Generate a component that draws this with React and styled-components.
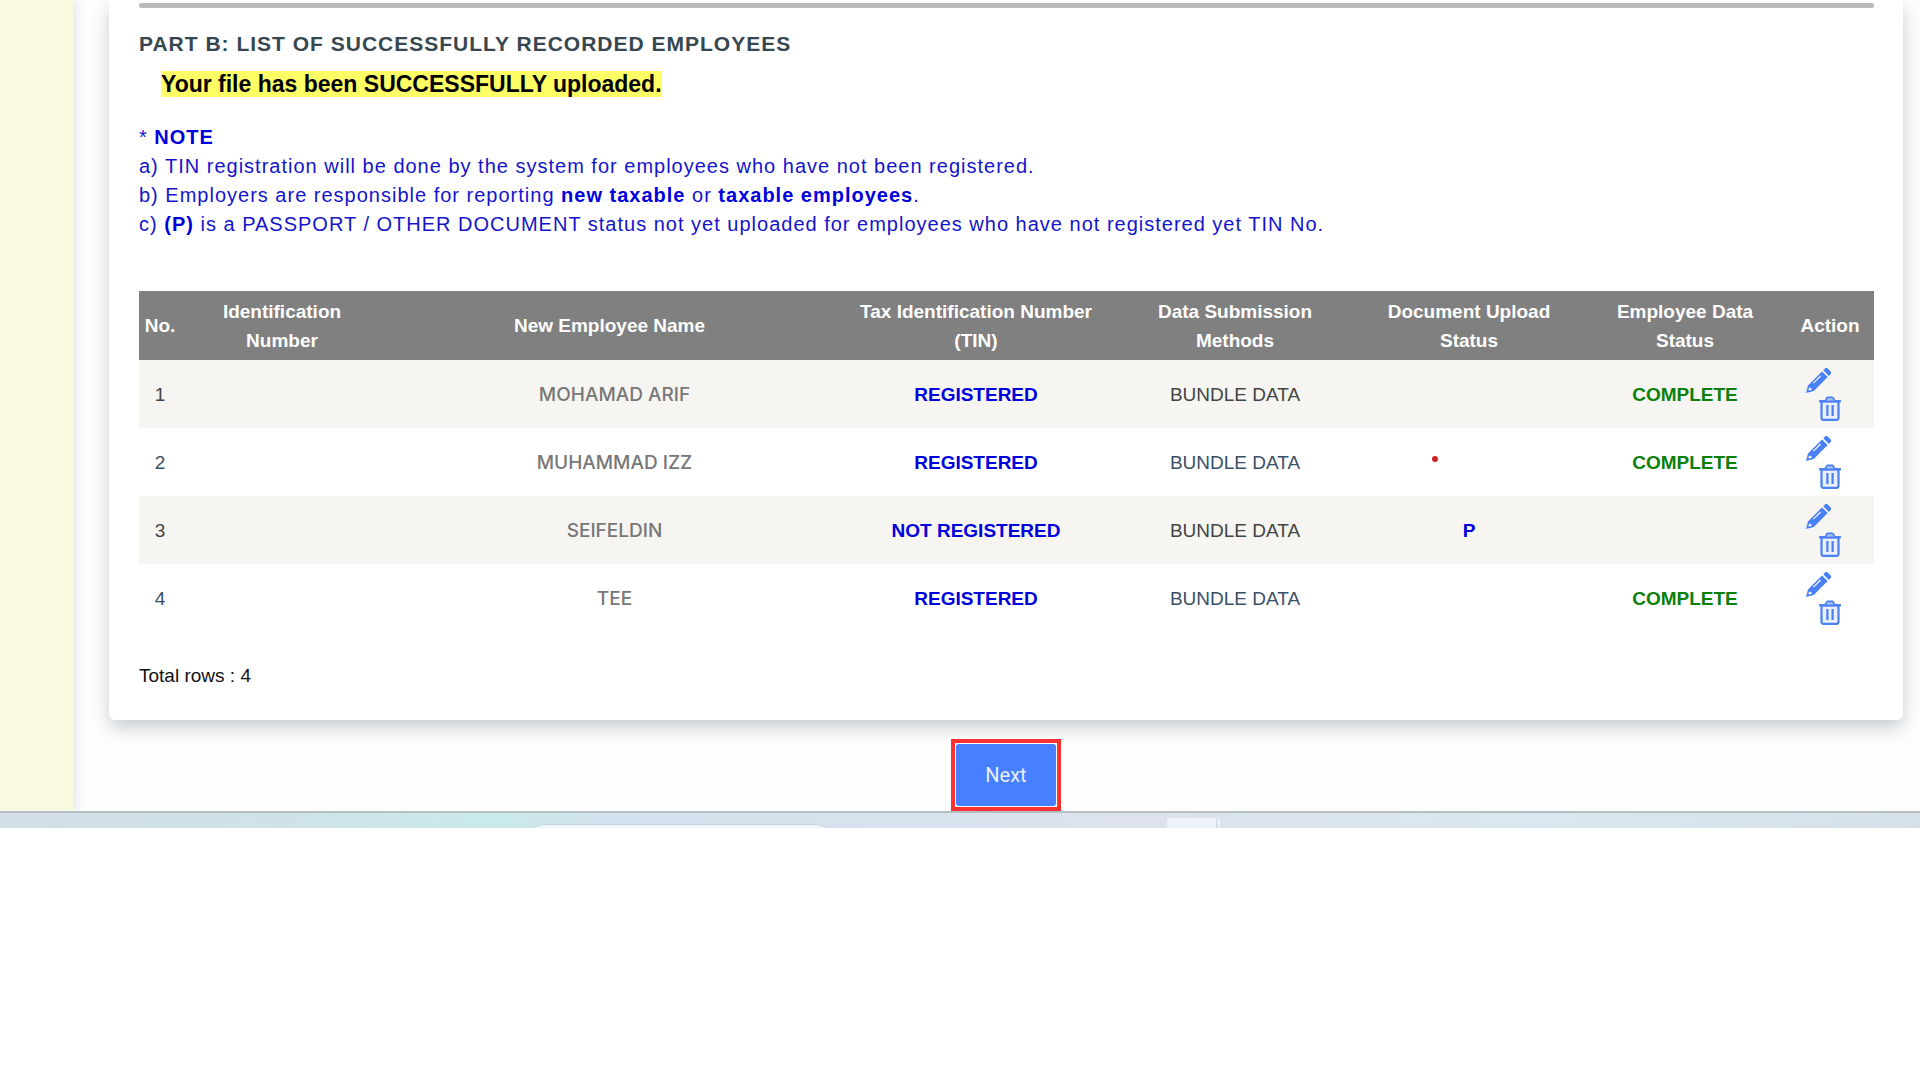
import React from 'react';
import styled, { createGlobalStyle } from 'styled-components';

const GlobalStyle = createGlobalStyle`
  * {
    box-sizing: border-box;
  }
  body {
    margin: 0;
    background-color: #ffffff;
    font-family: "Liberation Sans", Arial, sans-serif;
    font-size: 19px;
    line-height: 29px;
  }
`;

const Screen = styled.div`
  display: flex;
  flex-direction: column;
`;
const Page = styled.div`
  display: flex;
  background-color: #fefefe;
`;
const Sidebar = styled.aside`
  flex: 0 0 73px;
  background-color: #fafae0;
  box-shadow: 2px 0 12px rgba(70, 80, 110, 0.18);
`;
const Main = styled.main`
  flex: 1;
  min-width: 0;
  display: flex;
  flex-direction: column;
  align-items: center;
  padding: 0 17px 0 36px;
`;
const Card = styled.section`
  width: 100%;
  padding: 3px 29px 30px 30px;
  background-color: #ffffff;
  border-radius: 0 0 6px 6px;
  box-shadow: 0 8px 18px rgba(60, 80, 90, 0.28);
`;
const Divider = styled.hr`
  height: 5px;
  margin: 0;
  border: none;
  border-radius: 2px;
  background-color: #bbbbbb;
`;
const Title = styled.h2`
  margin: 21px 0 0;
  font-size: 21px;
  line-height: 29px;
  font-weight: bold;
  letter-spacing: 1px;
  color: #37474f;
`;
const Message = styled.p`
  margin: 11px 0 0 22px;
  font-size: 23px;
  line-height: 30px;
  font-weight: bold;
  color: #000000;
`;
const Mark = styled.mark`
  background-color: #ffff66;
  color: inherit;
`;
const Note = styled.div`
  margin-top: 24px;
  font-size: 20px;
  letter-spacing: 1px;
  color: #1414cc;

  p {
    margin: 0;
  }
  b {
    color: #0000dd;
  }
`;
const Table = styled.table`
  width: 100%;
  margin-top: 52px;
  table-layout: fixed;
  border-collapse: collapse;
`;
const Col = styled.col`
  width: ${(props) => props.$width};
`;
const HeadCell = styled.th`
  height: 69px;
  padding: 5px;
  background-color: #808080;
  font-weight: bold;
  color: #ffffff;
`;
const Row = styled.tr`
  height: 68px;
  color: #3a4f66;

  &:nth-child(odd) {
    background-color: #f6f5f1;
    color: #444444;
  }
`;
const Cell = styled.td`
  padding: 0 5px;
  text-align: center;
`;
const NameCell = styled(Cell)`
  padding-left: 15px;
  font-family: Inter, sans-serif;
  font-weight: 500;
  color: #777777;
`;
const Status = styled.b`
  color: ${(props) => props.$color};
`;
const Dot = styled.span`
  display: inline-block;
  width: 6px;
  height: 6px;
  margin: 0 68px 8px 0;
  border-radius: 50%;
  background-color: #cc2222;
  vertical-align: middle;
`;
const Actions = styled.div`
  display: flex;
  flex-direction: column;
  align-items: center;
  gap: 3px;
`;
const IconButton = styled.button`
  display: flex;
  margin: 0;
  padding: 0 ${(props) => (props.$shift ? '24px' : '0')} 0 0;
  border: none;
  background: none;
  color: #4a80f5;
  cursor: pointer;
`;
const Total = styled.p`
  margin: 29px 0 0;
  color: #111111;
`;
const NextFrame = styled.div`
  margin-top: 19px;
  padding: 1px;
  border: 4px solid #ff3131;
`;
const NextButton = styled.button`
  display: block;
  height: 62px;
  padding: 0 29px;
  border: none;
  border-radius: 3px;
  background-color: #467fff;
  font-family: Roboto, sans-serif;
  font-size: 20px;
  color: #e8f0ff;
  cursor: pointer;
`;
const Taskbar = styled.footer`
  display: flex;
  align-items: flex-start;
  height: 17px;
  padding-left: 525px;
  overflow: hidden;
  border-top: 2px solid #b4c0c4;
  background: linear-gradient(
    90deg,
    #d2dee8 0%,
    #cfe2ea 15%,
    #c9eaea 26%,
    #d2e2ee 31%,
    #d8e2ee 50%,
    #dde2ee 59%,
    #d8e7f1 80%,
    #d5e0eb 100%
  );
`;
const SearchTab = styled.div`
  width: 310px;
  height: 40px;
  margin-top: 11px;
  border-top: 1px solid #c6d3dc;
  border-radius: 20px;
  background-color: #eef5f9;
`;
const AppTab = styled.div`
  width: 53px;
  height: 40px;
  margin: 5px 0 0 332px;
  border-right: 2px solid #f0f5fa;
  border-radius: 4px;
  background: linear-gradient(90deg, #edf2f9 49px, #d5dfe9 49px);
`;

const PencilIcon = () => (
  <svg width="25" height="25" viewBox="0 0 25 25" fill="currentColor" aria-hidden="true">
    <path d="M17.2 2.2l1.3-1.3a2.6 2.6 0 0 1 3.7 0l2 2a2.6 2.6 0 0 1 0 3.7l-1.3 1.3z" />
    <path
      fillRule="evenodd"
      d="M16 3.4l5.7 5.7L7.8 23 0 25l2-7.6zM14.2 7.6L7 14.8l.8.8L15 8.4zM3.2 19.4l-.7 2.4.8.7 2.4-.7-.4-1.5z"
    />
  </svg>
);

const TrashIcon = () => (
  <svg width="22" height="25" viewBox="0 0 22 25" fill="none" stroke="currentColor" aria-hidden="true">
    <path d="M2.5 5.5h17V22a1.8 1.8 0 0 1-1.8 1.8H4.3A1.8 1.8 0 0 1 2.5 22z" fill="#e9effb" strokeWidth="2.2" />
    <path d="M0 5.2h22" strokeWidth="2.2" />
    <path d="M6.5 4.5l1.4-2.6a1 1 0 0 1 .9-.6h4.4a1 1 0 0 1 .9.6l1.4 2.6" fill="#a9c0f3" strokeWidth="1.8" />
    <path d="M8.4 9v11M13.6 9v11" strokeWidth="2.2" />
  </svg>
);

const columns = [
  { label: 'No.', width: '42px' },
  { label: 'Identification Number', width: '202px' },
  { label: 'New Employee Name', width: 'auto' },
  { label: 'Tax Identification Number (TIN)', width: '280px' },
  { label: 'Data Submission Methods', width: '238px' },
  { label: 'Document Upload Status', width: '230px' },
  { label: 'Employee Data Status', width: '202px' },
  { label: 'Action', width: '88px' },
];

const employees = [
  { name: 'MOHAMAD ARIF', tin: 'REGISTERED', status: 'COMPLETE' },
  { name: 'MUHAMMAD IZZ', tin: 'REGISTERED', status: 'COMPLETE', dot: true },
  { name: 'SEIFELDIN', tin: 'NOT REGISTERED', upload: 'P' },
  { name: 'TEE', tin: 'REGISTERED', status: 'COMPLETE' },
];

const EmployeeTable = () => {
  return (
    <Table>
      <colgroup>
        {columns.map((column) => (
          <Col key={column.label} $width={column.width} />
        ))}
      </colgroup>
      <thead>
        <tr>
          {columns.map((column) => (
            <HeadCell key={column.label} scope="col">{column.label}</HeadCell>
          ))}
        </tr>
      </thead>
      <tbody>
        {employees.map((employee, index) => (
          <Row key={employee.name}>
            <Cell>{index + 1}</Cell>
            <Cell />
            <NameCell>{employee.name}</NameCell>
            <Cell><Status $color="#0000dd">{employee.tin}</Status></Cell>
            <Cell>BUNDLE DATA</Cell>
            <Cell>
              {employee.dot && <Dot />}
              <Status $color="#0000dd">{employee.upload}</Status>
            </Cell>
            <Cell><Status $color="#0a800a">{employee.status}</Status></Cell>
            <Cell>
              <Actions>
                <IconButton type="button" $shift aria-label={`Edit ${employee.name}`}>
                  <PencilIcon />
                </IconButton>
                <IconButton type="button" aria-label={`Delete ${employee.name}`}>
                  <TrashIcon />
                </IconButton>
              </Actions>
            </Cell>
          </Row>
        ))}
      </tbody>
    </Table>
  )
}

const App = () => {
  return (
    <Screen>
      <GlobalStyle />
      <Page>
        <Sidebar />
        <Main>
          <Card>
            <Divider />
            <Title>PART B: LIST OF SUCCESSFULLY RECORDED EMPLOYEES</Title>
            <Message><Mark>Your file has been SUCCESSFULLY uploaded.</Mark></Message>
            <Note>
              <p>* <b>NOTE</b></p>
              <p>a) TIN registration will be done by the system for employees who have not been registered.</p>
              <p>b) Employers are responsible for reporting <b>new taxable</b> or <b>taxable employees</b>.</p>
              <p>c) <b>(P)</b> is a PASSPORT / OTHER DOCUMENT status not yet uploaded for employees who have not registered yet TIN No.</p>
            </Note>
            <EmployeeTable />
            <Total>Total rows : {employees.length}</Total>
          </Card>
          <NextFrame>
            <NextButton type="button">Next</NextButton>
          </NextFrame>
        </Main>
      </Page>
      <Taskbar>
        <SearchTab />
        <AppTab />
      </Taskbar>
    </Screen>
  )
}

export default App
